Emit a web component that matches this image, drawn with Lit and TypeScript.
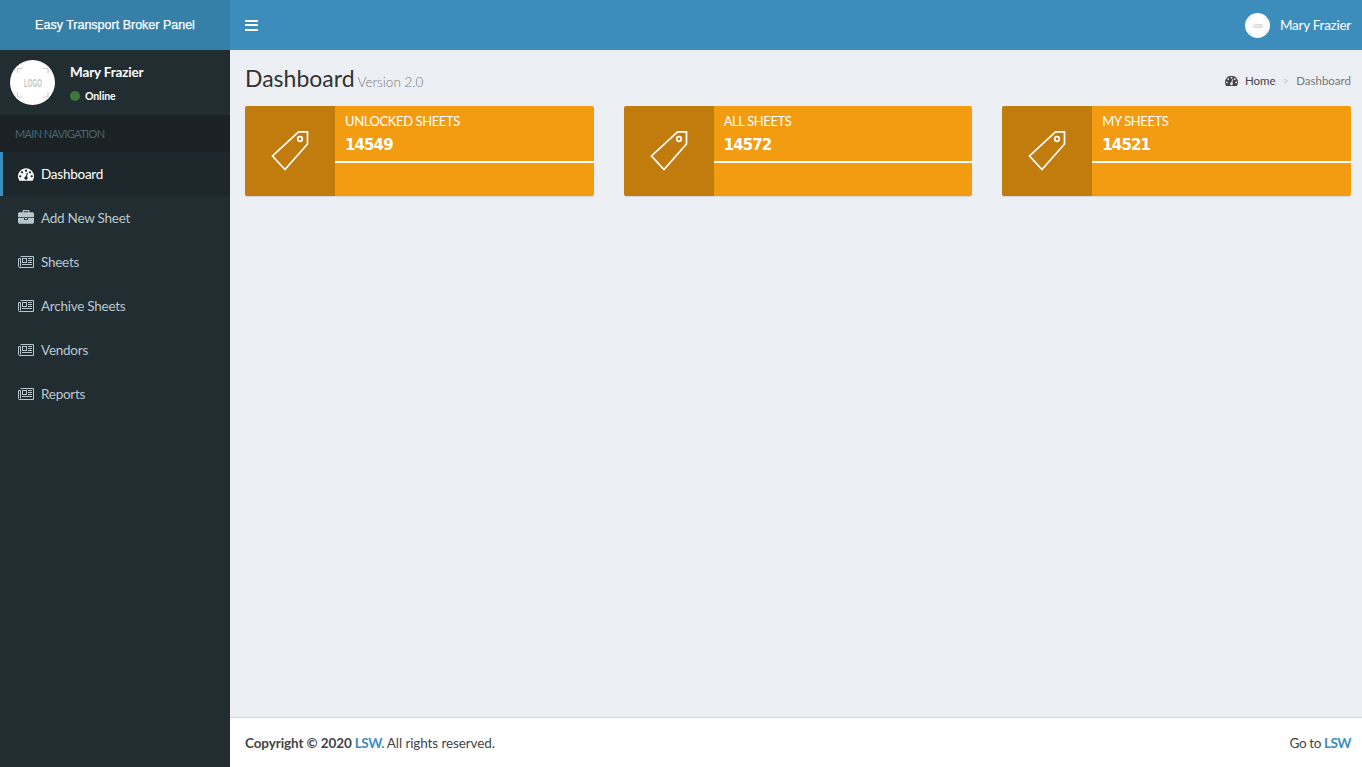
import { LitElement, html, css, svg } from "lit";
import { customElement } from "lit/decorators.js";

const gauge = svg`<path d="M384 1152q0-53-37.5-90.5t-90.5-37.5-90.5 37.5-37.5 90.5 37.5 90.5 90.5 37.5 90.5-37.5 37.5-90.5zm192-448q0-53-37.5-90.5t-90.5-37.5-90.5 37.5-37.5 90.5 37.5 90.5 90.5 37.5 90.5-37.5 37.5-90.5zm428 481l101-382q6-26-7.5-48.5t-38.5-29.5-48 6.5-30 39.5l-101 382q-60 5-107 43.5t-63 98.5q-20 77 20 146t117 89 146-20 89-117q16-60-6-117t-72-91zm660-33q0-53-37.5-90.5t-90.5-37.5-90.5 37.5-37.5 90.5 37.5 90.5 90.5 37.5 90.5-37.5 37.5-90.5zm-640-640q0-53-37.5-90.5t-90.5-37.5-90.5 37.5-37.5 90.5 37.5 90.5 90.5 37.5 90.5-37.5 37.5-90.5zm448 192q0-53-37.5-90.5t-90.5-37.5-90.5 37.5-37.5 90.5 37.5 90.5 90.5 37.5 90.5-37.5 37.5-90.5zm320 448q0 261-141 483-19 29-54 29h-1402q-35 0-54-29-141-221-141-483 0-182 71-348t191-286 286-191 348-71 348 71 286 191 191 286 71 348z"/>`;
const briefcase = svg`<path d="M640 256h512v-128h-512v128zm1152 640v480q0 66-47 113t-113 47h-1472q-66 0-113-47t-47-113v-480h672v160q0 26 19 45t45 19h320q26 0 45-19t19-45v-160h672zm-768 0v128h-256v-128h256zm768-480v384h-1792v-384q0-66 47-113t113-47h352v-160q0-40 28-68t68-28h576q40 0 68 28t28 68v160h352q66 0 113 47t47 113z"/>`;

function faIcon(body: unknown, cls: string) {
  return html`<svg class=${cls} viewBox="0 0 1792 1792" fill="currentColor" aria-hidden="true">${body}</svg>`;
}

const newspaper = html`<svg class="ic" viewBox="0 0 16 16" fill="none" stroke="currentColor" stroke-width="1" aria-hidden="true">
  <path d="M2.500 2.500H15.500V13.500H1.500A1 1 0 0 1 .5 12.500V4.500H2.500V12.500" />
  <rect x="4.500" y="4.500" width="4" height="4"/>
  <path d="M10 4.500H14M10 6.500H14M10 8.500H14M4 10.500H14" />
</svg>`;

const tag = html`<svg class="tag" viewBox="0 0 38 40" fill="none" stroke="#fff" stroke-width="1.700" aria-hidden="true">
  <path d="M27.500 .85H36.500V13L14 38.500L1.500 25Z"/>
  <circle cx="29" cy="8" r="2.300"/>
</svg>`;

function logo(cls: string) {
  return html`<svg class=${cls} viewBox="0 0 45 45" aria-hidden="true">
    <circle cx="22.500" cy="22.500" r="22.500" fill="#fff"/>
    <path d="M7.500 13V8.500H12M33 8.500H38V13M7.500 32V37H12M33 37H38V32" fill="none" stroke="#cfcfcf" stroke-width="1.200"/>
    <text x="23" y="27" text-anchor="middle" font-family="Liberation Sans, sans-serif" font-size="10" font-weight="700" fill="#c4c4c4" textLength="18" lengthAdjust="spacingAndGlyphs">LOGO</text>
  </svg>`;
}

const nav = [
  { label: "Dashboard", icon: faIcon(gauge, "ic"), active: true },
  { label: "Add New Sheet", icon: faIcon(briefcase, "ic") },
  { label: "Sheets", icon: newspaper },
  { label: "Archive Sheets", icon: newspaper },
  { label: "Vendors", icon: newspaper },
  { label: "Reports", icon: newspaper },
];

const boxes = [
  { label: "Unlocked Sheets", value: "14549" },
  { label: "All Sheets", value: "14572" },
  { label: "My Sheets", value: "14521" },
];

@customElement("app-root")
export class AppRoot extends LitElement {
  static styles = css`
    :host {
      display: grid;
      grid-template-columns: 230px 1fr;
      grid-template-rows: 50px 1fr;
      height: 100vh;
      min-height: 767px;
      background: #ecf0f5;
      color: #333;
      font-family: "Lato", "Noto Sans", sans-serif;
      font-size: 14px;
      overflow: hidden;
    }
    .brand {
      background: #367fa9;
      color: #fff;
      display: flex;
      align-items: center;
      justify-content: center;
      font-family: "Liberation Sans", sans-serif;
      font-size: 12.500px;
      font-weight: 400;
      -webkit-text-stroke: .25px #fff;
      padding-bottom: 1px;
      box-sizing: border-box;
    }
    .topbar {
      background: #3c8dbc;
      color: #fff;
      display: flex;
      align-items: center;
      justify-content: space-between;
      padding: 0 11px 0 15px;
    }
    .toggle { display: flex; flex-direction: column; gap: 2.500px; width: 13px; }
    .toggle i { display: block; height: 2px; background: #fff; }
    .topuser { display: flex; align-items: center; gap: 10px; font-size: 13.500px; letter-spacing: -.25px; }
    .topavatar { width: 25px; height: 25px; display: block; }

    aside { background: #222d32; display: flex; flex-direction: column; }
    .panel { height: 65px; box-sizing: border-box; padding: 10px; display: flex; gap: 15px; }
    .avatar { width: 45px; height: 45px; display: block; flex: none; }
    .who { display: flex; flex-direction: column; color: #fff; }
    .name { font-weight: 700; font-size: 13.500px; line-height: 16px; margin-top: 4px; letter-spacing: -.15px; }
    .status { display: flex; align-items: center; gap: 5px; font-size: 10.500px; font-weight: 700; margin-top: 9px; line-height: 14px; letter-spacing: -.1px; }
    .dot { width: 10px; height: 10px; border-radius: 50%; background: #3c763d; }
    .navhead {
      background: #1a2226;
      color: #4b646f;
      height: 37px;
      display: flex;
      align-items: center;
      padding-left: 15px;
      font-size: 11px;
      letter-spacing: -.65px;
      text-transform: uppercase;
    }
    .item {
      height: 44px;
      box-sizing: border-box;
      display: flex;
      align-items: center;
      gap: 7px;
      padding-left: 18px;
      color: #b8c7ce;
      font-size: 13.500px;
      letter-spacing: -.25px;
    }
    .item.active { background: #1e282c; color: #fff; border-left: 3px solid #3c8dbc; padding-left: 15px; }
    .ic { width: 16px; height: 16px; display: block; flex: none; }

    .right { display: flex; flex-direction: column; min-width: 0; }
    main { flex: 1; padding: 0 11px 0 15px; }
    .pagehead { height: 56px; display: flex; align-items: center; justify-content: space-between; padding-top: 1px; box-sizing: border-box; }
    h1 { margin: 0; font-size: 23px; font-weight: 400; color: #333; line-height: 1; }
    h1 small { font-size: 13.500px; font-weight: 300; color: #777; margin-left: -3px; }
    .crumbs { display: flex; align-items: center; font-size: 11.500px; color: #777; padding-top: 4px; }
    .crumbs .home { color: #444; display: flex; align-items: center; gap: 7px; }
    .crumbs .ic { width: 13px; height: 13px; }
    .crumbs .sep { color: #ccc; padding: 0 7px; }

    .grid { display: grid; grid-template-columns: repeat(3, 1fr); gap: 30px; }
    .box {
      display: flex;
      height: 90px;
      background: #f39c12;
      color: #fff;
      border-radius: 2px;
      box-shadow: 0 1px 1px rgba(0,0,0,.1);
      overflow: hidden;
    }
    .boxicon { width: 90px; flex: none; background: rgba(0,0,0,.2); display: flex; align-items: center; justify-content: center; }
    .tag { width: 38px; height: 40px; display: block; margin: 0 0 1px; }
    .boxbody { flex: 1; min-width: 0; }
    .boxtext { padding: 7px 10px 0; height: 48px; box-sizing: border-box; }
    .boxlabel { text-transform: uppercase; font-size: 13px; line-height: 16px; letter-spacing: -.4px; }
    .boxval { font-family: "DejaVu Sans", sans-serif; font-weight: 700; font-size: 15px; line-height: 20px; margin-top: 6px; letter-spacing: -.9px; }
    .bar { height: 2px; background: #fff; margin-top: 7px; }

    footer {
      height: 50px;
      box-sizing: border-box;
      background: #fff;
      border-top: 1px solid #d2d6de;
      display: flex;
      align-items: center;
      justify-content: space-between;
      padding: 0 11px 0 15px;
      color: #444;
      font-size: 13.500px;
      letter-spacing: -.1px;
    }
    footer a { color: #3c8dbc; font-weight: 700; text-decoration: none; letter-spacing: -.5px; }
    footer b { font-weight: 700; }
    .goto { letter-spacing: -.4px; }
  `;

  render() {
    return html`
      <div class="brand">Easy Transport Broker Panel</div>
      <header class="topbar">
        <div class="toggle"><i></i><i></i><i></i></div>
        <div class="topuser">${logo("topavatar")}<span>Mary Frazier</span></div>
      </header>
      <aside>
        <div class="panel">
          ${logo("avatar")}
          <div class="who">
            <div class="name">Mary Frazier</div>
            <div class="status"><span class="dot"></span>Online</div>
          </div>
        </div>
        <div class="navhead">Main Navigation</div>
        ${nav.map(n => html`<div class="item ${n.active ? "active" : ""}">${n.icon}<span>${n.label}</span></div>`)}
      </aside>
      <div class="right">
        <main>
          <div class="pagehead">
            <h1>Dashboard <small>Version 2.0</small></h1>
            <div class="crumbs">
              <span class="home">${faIcon(gauge, "ic")}Home</span>
              <span class="sep">&gt;</span>
              <span>Dashboard</span>
            </div>
          </div>
          <div class="grid">
            ${boxes.map(b => html`
              <div class="box">
                <div class="boxicon">${tag}</div>
                <div class="boxbody">
                  <div class="boxtext">
                    <div class="boxlabel">${b.label}</div>
                    <div class="boxval">${b.value}</div>
                  </div>
                  <div class="bar"></div>
                </div>
              </div>`)}
          </div>
        </main>
        <footer>
          <div><b>Copyright © 2020 <a>LSW.</a></b> All rights reserved.</div>
          <div class="goto">Go to <a>LSW</a></div>
        </footer>
      </div>
    `;
  }
}
